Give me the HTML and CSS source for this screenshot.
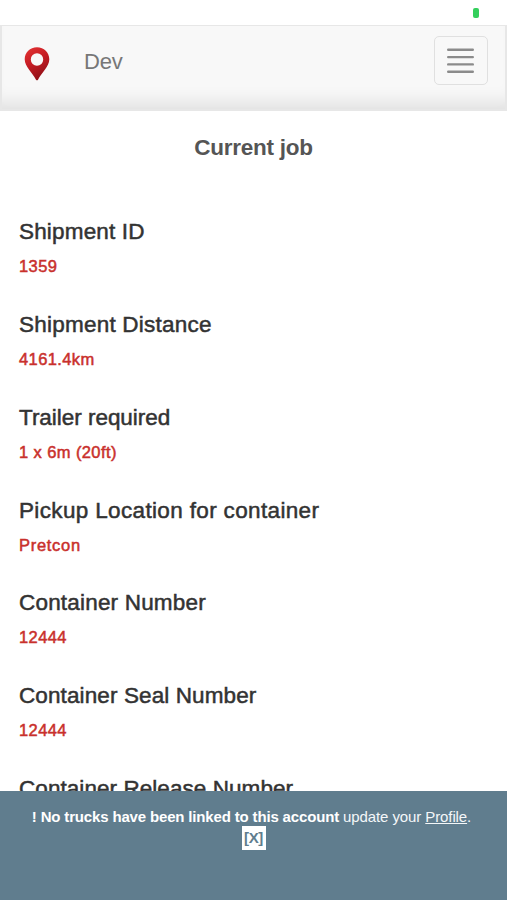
FILE: index.html
```html
<!DOCTYPE html>
<html lang="en">
<head>
<meta charset="utf-8">
<meta name="viewport" content="width=device-width, initial-scale=1">
<title>Current job</title>
<link rel="stylesheet" href="styles.css">
</head>
<body>
<div class="screen">
  <div class="status"><span class="indicator"></span></div>
  <header class="navbar">
    <svg class="pin" width="26" height="34" viewBox="0 0 26 34" aria-hidden="true">
      <defs>
        <linearGradient id="red" x1="0" y1="0" x2=".45" y2="1">
          <stop offset="0" stop-color="#e53434"/>
          <stop offset=".5" stop-color="#c61d24"/>
          <stop offset="1" stop-color="#941018"/>
        </linearGradient>
      </defs>
      <path fill="url(#red)" fill-rule="evenodd" d="M13 .3C6 .3.7 5.6.7 12.2c0 7.300 7.600 13.300 11.300 20.500.4.800 1.600.800 2 0C17.700 25.500 25.300 19.500 25.300 12.200 25.300 5.600 20 .3 13 .3ZM13 6.300a6.200 6.200 0 1 1 0 12.400a6.200 6.200 0 1 1 0-12.400Z"/>
    </svg>
    <span class="brand">Dev</span>
    <button class="toggle" aria-label="Menu">
      <svg width="27" height="26" viewBox="0 0 27 26" stroke="#8b8b8b" stroke-width="2.400" stroke-linecap="round" aria-hidden="true">
        <path d="M1.200 1.700H25.800M1.200 9.100H25.800M1.200 16.400H25.800M1.200 23.800H25.800"/>
      </svg>
    </button>
  </header>
  <main class="content">
    <h1>Current job</h1>
    <dl class="details">
      <div class="item"><dt>Shipment ID</dt><dd>1359</dd></div>
      <div class="item"><dt>Shipment Distance</dt><dd>4161.4km</dd></div>
      <div class="item"><dt>Trailer required</dt><dd>1 x 6m (20ft)</dd></div>
      <div class="item"><dt>Pickup Location for container</dt><dd>Pretcon</dd></div>
      <div class="item"><dt>Container Number</dt><dd>12444</dd></div>
      <div class="item"><dt>Container Seal Number</dt><dd>12444</dd></div>
      <div class="item"><dt>Container Release Number</dt></div>
    </dl>
  </main>
  <footer class="notice">
    <p><b>! No trucks have been linked to this account</b> update your <a href="#">Profile</a>.</p>
    <button class="close">[X]</button>
  </footer>
</div>
</body>
</html>
```
FILE: styles.css
```css
* { box-sizing: border-box; }
body {
  margin: 0;
  background: #fff;
  font-family: "Liberation Sans", Arial, sans-serif;
}
.screen {
  display: flex;
  flex-direction: column;
  height: 900px;
  overflow: hidden;
}
.status {
  display: flex;
  flex: none;
  justify-content: flex-end;
  height: 25px;
  padding: 8px 28px 0 0;
}
.indicator {
  width: 6px;
  height: 10px;
  border-radius: 2px;
  background: #34cf5c;
}
.navbar {
  display: flex;
  flex: none;
  align-items: flex-start;
  height: 86px;
  padding: 10px 17px 0 22px;
  border: 2px solid #e7e7e7;
  border-top-width: 1px;
  background: #f8f8f8;
  box-shadow: inset 0 -20px 18px -14px rgba(0, 0, 0, .1);
}
.pin { margin-top: 11px; }
.brand {
  margin: 12px 0 0 34px;
  color: #777;
  font-size: 22px;
  line-height: 28px;
  letter-spacing: -.2px;
}
.toggle {
  display: flex;
  width: 54px;
  height: 49px;
  margin-left: auto;
  padding: 11px 12px;
  border: 1.500px solid #e0e0e0;
  border-radius: 5px;
  background: transparent;
}
.content {
  flex: 1;
  min-height: 0;
  overflow: hidden;
}
h1 {
  margin: 23px 0 0;
  color: #555;
  font-size: 22.500px;
  line-height: 28px;
  letter-spacing: -.27px;
  text-align: center;
}
.details { margin: 56px 0 0 19px; }
.item { height: 92.850px; }
dt {
  color: #333;
  font-size: 22.500px;
  line-height: 28px;
  letter-spacing: .35px;
  -webkit-text-stroke: .5px #333;
}
dd {
  margin: 9px 0 0;
  color: #c9302c;
  font-size: 16.500px;
  line-height: 22px;
  letter-spacing: .4px;
  -webkit-text-stroke: .5px #c9302c;
}
.item:nth-child(1) dt { letter-spacing: .17px; }
.item:nth-child(2) dt { letter-spacing: .23px; }
.item:nth-child(3) dt { letter-spacing: -.03px; }
.item:nth-child(4) dd { letter-spacing: .7px; }
.item:nth-child(5) dt { letter-spacing: .19px; }
.item:nth-child(6) dt { letter-spacing: .11px; }
.item:nth-child(7) dt { letter-spacing: .06px; }
.notice {
  flex: none;
  height: 109px;
  padding-top: 16px;
  background: #607d8e;
  color: #f4f7f9;
  font-size: 15px;
  letter-spacing: -.1px;
  text-align: center;
}
.notice p {
  margin: 0;
  padding-right: 4px;
  line-height: 20px;
  white-space: nowrap;
}
.notice b { color: #fff; letter-spacing: -.16px; }
.notice a { color: inherit; text-underline-offset: 1px; }
.close {
  display: block;
  width: 24px;
  height: 24px;
  margin: -1px auto 0;
  padding: 0;
  border: 0;
  background: #fff;
  color: #607d8e;
  font: bold 15px/24px "Liberation Sans", Arial, sans-serif;
  letter-spacing: -.4px;
}
```
